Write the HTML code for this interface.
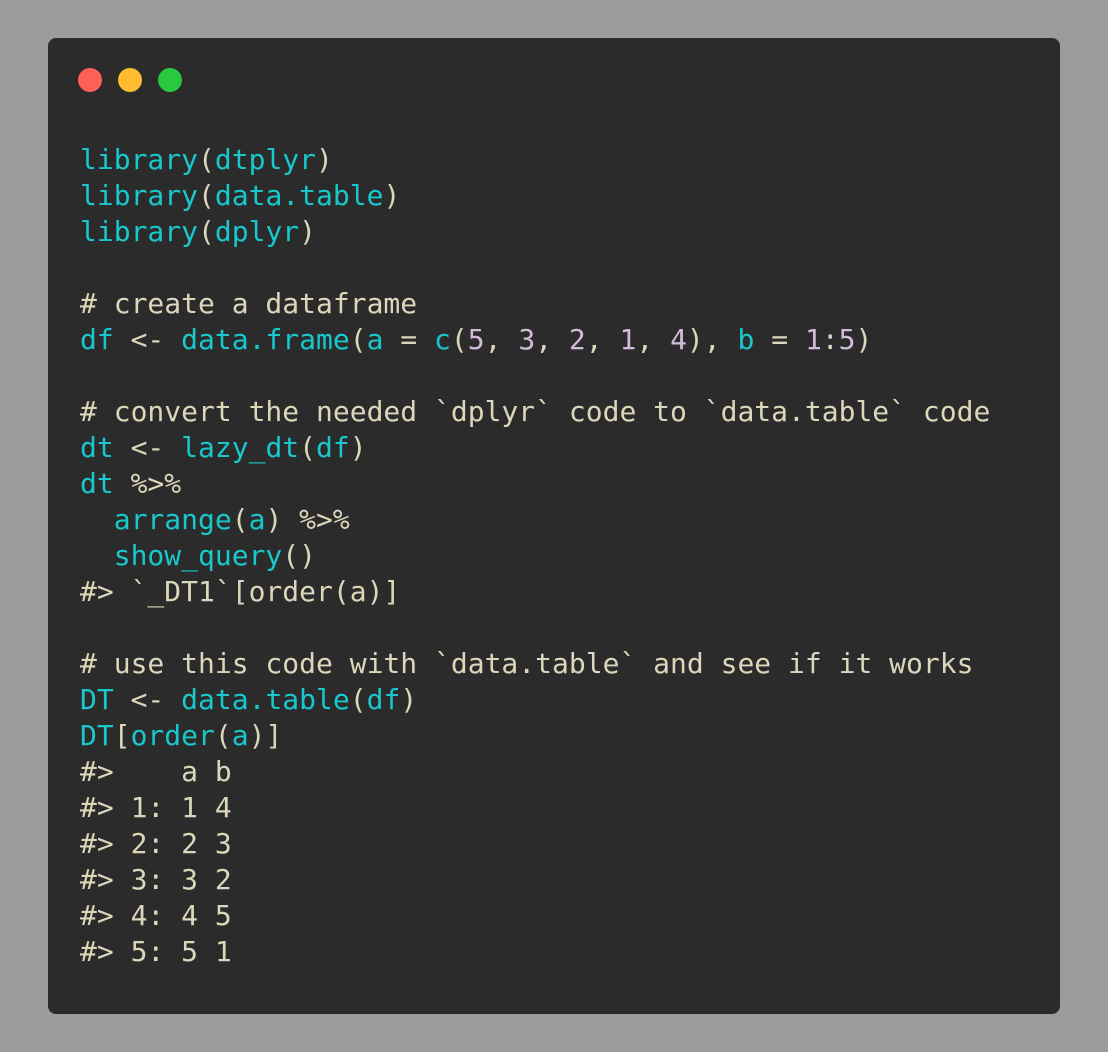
<!DOCTYPE html>
<html><head><meta charset="utf-8"><style>
body{margin:0;width:1108px;height:1052px;background:#9b9b9b;overflow:hidden}
.win{position:absolute;left:48px;top:38px;width:1012px;height:976px;background:#2b2b2b;border-radius:8px}
.d{position:absolute;top:68px;width:24px;height:24px;border-radius:50%}
pre{position:absolute;left:80px;top:142px;margin:0;font-family:"DejaVu Sans Mono","Liberation Mono",monospace;font-size:28px;line-height:36px;color:#dcd6bb}
.c{color:#18c8cc}.n{color:#d2bcd8}
</style></head><body>
<div class="win"></div>
<div class="d" style="left:78px;background:#fe5f57"></div>
<div class="d" style="left:118px;background:#febc2e"></div>
<div class="d" style="left:158px;background:#28c840"></div>
<pre><span class="c">library</span>(<span class="c">dtplyr</span>)
<span class="c">library</span>(<span class="c">data.table</span>)
<span class="c">library</span>(<span class="c">dplyr</span>)

# create a dataframe
<span class="c">df</span> &lt;- <span class="c">data.frame</span>(<span class="c">a</span> = <span class="c">c</span>(<span class="n">5</span>, <span class="n">3</span>, <span class="n">2</span>, <span class="n">1</span>, <span class="n">4</span>), <span class="c">b</span> = <span class="n">1</span>:<span class="n">5</span>)

# convert the needed `dplyr` code to `data.table` code
<span class="c">dt</span> &lt;- <span class="c">lazy_dt</span>(<span class="c">df</span>)
<span class="c">dt</span> %&gt;%
  <span class="c">arrange</span>(<span class="c">a</span>) %&gt;%
  <span class="c">show_query</span>()
#&gt; `_DT1`[order(a)]

# use this code with `data.table` and see if it works
<span class="c">DT</span> &lt;- <span class="c">data.table</span>(<span class="c">df</span>)
<span class="c">DT</span>[<span class="c">order</span>(<span class="c">a</span>)]
#&gt;    a b
#&gt; 1: 1 4
#&gt; 2: 2 3
#&gt; 3: 3 2
#&gt; 4: 4 5
#&gt; 5: 5 1</pre>
</body></html>
